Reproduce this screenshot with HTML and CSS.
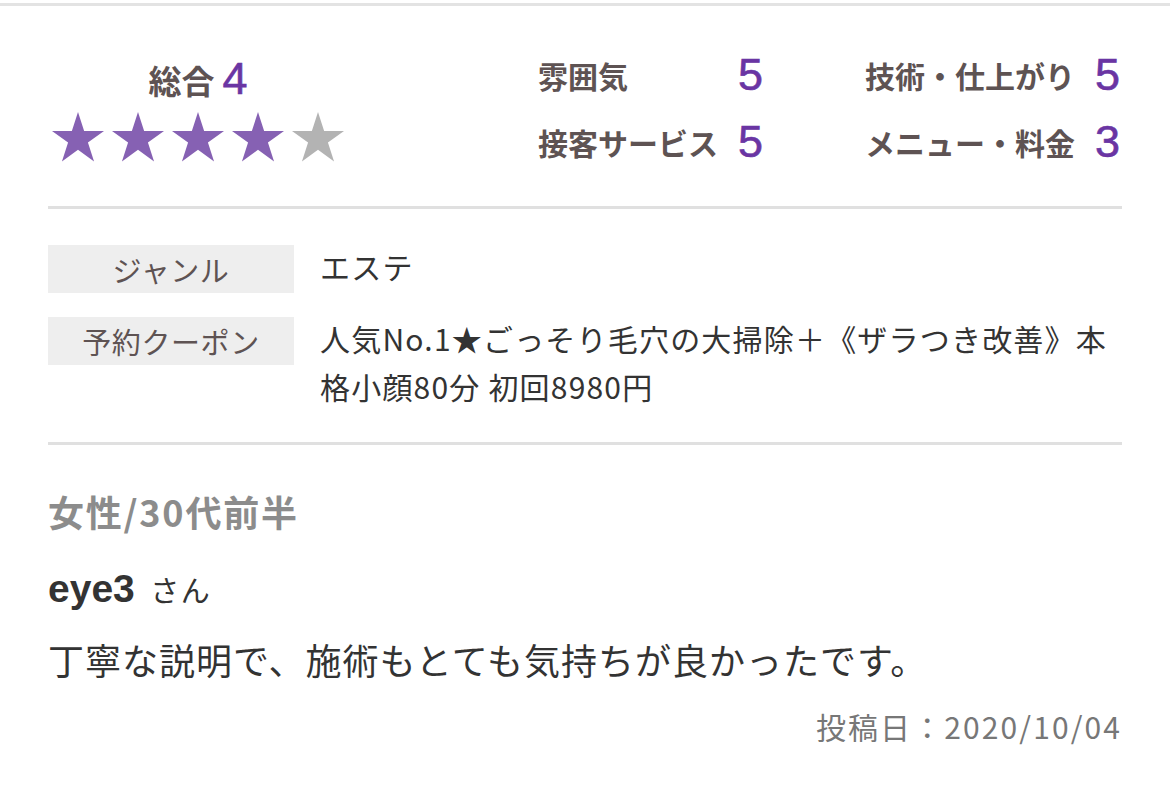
FILE: index.html
```html
<!DOCTYPE html>
<html lang="ja">
<head>
<meta charset="utf-8">
<title>口コミ</title>
<link rel="stylesheet" href="styles.css">
</head>
<body>
<div class="topline"></div>
<div class="wrap">
  <section class="summary">
    <div class="overall">
      <div class="overall-title"><span class="overall-label">総合</span><span class="overall-num">4</span></div>
      <div class="stars">
        <svg class="star on" viewBox="0 0 52 50"><polygon points="26,0 32.14,18.89 52,18.89 35.93,30.57 42.07,49.46 26,37.78 9.93,49.46 16.07,30.57 0,18.89 19.86,18.89"/></svg>
        <svg class="star on" viewBox="0 0 52 50"><polygon points="26,0 32.14,18.89 52,18.89 35.93,30.57 42.07,49.46 26,37.78 9.93,49.46 16.07,30.57 0,18.89 19.86,18.89"/></svg>
        <svg class="star on" viewBox="0 0 52 50"><polygon points="26,0 32.14,18.89 52,18.89 35.93,30.57 42.07,49.46 26,37.78 9.93,49.46 16.07,30.57 0,18.89 19.86,18.89"/></svg>
        <svg class="star on" viewBox="0 0 52 50"><polygon points="26,0 32.14,18.89 52,18.89 35.93,30.57 42.07,49.46 26,37.78 9.93,49.46 16.07,30.57 0,18.89 19.86,18.89"/></svg>
        <svg class="star off" viewBox="0 0 52 50"><polygon points="26,0 32.14,18.89 52,18.89 35.93,30.57 42.07,49.46 26,37.78 9.93,49.46 16.07,30.57 0,18.89 19.86,18.89"/></svg>
      </div>
    </div>
    <div class="scores">
      <span class="score-label">雰囲気</span><span class="score-num">5</span>
      <span class="score-label col2">技術・仕上がり</span><span class="score-num">5</span>
      <span class="score-label">接客サービス</span><span class="score-num">5</span>
      <span class="score-label col2">メニュー・料金</span><span class="score-num">3</span>
    </div>
  </section>
  <div class="divider"></div>
  <section class="info">
    <div class="info-label">ジャンル</div>
    <div class="info-value">エステ</div>
    <div class="info-label">予約クーポン</div>
    <div class="info-value">人気No.1★ごっそり毛穴の大掃除＋《ザラつき改善》本格小顔80分 初回8980円</div>
  </section>
  <div class="divider"></div>
  <section class="review">
    <div class="reviewer-attr">女性/30代前半</div>
    <div class="reviewer"><span class="reviewer-name">eye3</span> <span class="reviewer-san">さん</span></div>
    <p class="review-text">丁寧な説明で、施術もとても気持ちが良かったです。</p>
    <div class="review-date">投稿日：2020/10/04</div>
  </section>
</div>
</body>
</html>
```
FILE: styles.css
```css
html, body {
  margin: 0;
  padding: 0;
  background: #ffffff;
}
body {
  font-family: "Noto Sans CJK JP", "Noto Sans", sans-serif;
  color: #333333;
}
.topline {
  margin-top: 3px;
  height: 3px;
  background: #e3e3e3;
}
.wrap {
  padding: 0 48px;
}
.summary {
  display: flex;
  justify-content: space-between;
  align-items: flex-start;
  padding-top: 44px;
  height: 156px;
}
.overall {
  width: 300px;
  text-align: center;
  padding-top: 7px;
}
.overall-title {
  height: 44px;
  line-height: 44px;
  display: flex;
  justify-content: center;
  align-items: baseline;
}
.overall-label {
  font-size: 33px;
  font-weight: 700;
  color: #5e5353;
}
.overall-num {
  font-family: "Liberation Sans", Arial, sans-serif;
  font-size: 45px;
  color: #6a35a3;
  margin-left: 8px;
  -webkit-text-stroke: 0.6px #6a35a3;
}
.stars {
  display: flex;
  justify-content: center;
  gap: 8px;
  margin-top: 11px;
}
.star {
  width: 52px;
  height: 50px;
  display: block;
}
.star.on { fill: #8661b3; }
.star.off { fill: #b3b3b3; }
.scores {
  display: grid;
  grid-template-columns: auto auto auto auto;
  column-gap: 20px;
  row-gap: 17px;
  align-items: center;
  padding-top: 0;
}
.score-label {
  font-size: 30px;
  font-weight: 700;
  color: #5e5353;
  line-height: 50px;
}
.score-label.col2 {
  margin-left: 80px;
}
.score-num {
  font-family: "Liberation Sans", Arial, sans-serif;
  font-size: 45px;
  color: #6a35a3;
  line-height: 50px;
  width: 27px;
  -webkit-text-stroke: 0.6px #6a35a3;
}
.divider {
  height: 3px;
  background: #e0e0e0;
}
.info {
  display: grid;
  grid-template-columns: 246px 1fr;
  column-gap: 26px;
  row-gap: 24px;
  padding: 36px 0 32px;
}
.info-label {
  background: #eeeeee;
  height: 48px;
  line-height: 48px;
  text-align: center;
  font-size: 29px;
  color: #5e5353;
  letter-spacing: 0.02em;
}
.info-value {
  font-size: 30px;
  line-height: 48px;
  letter-spacing: 0.04em;
  color: #333333;
  margin-top: -3px;
}
.review {
  padding-top: 41px;
}
.reviewer-attr {
  font-size: 36px;
  font-weight: 700;
  color: #8c8c8c;
  line-height: 50px;
  letter-spacing: 0.05em;
}
.reviewer {
  margin-top: 28px;
  line-height: 50px;
  color: #333333;
}
.reviewer-name {
  font-family: "Liberation Sans", Arial, sans-serif;
  font-weight: 700;
  font-size: 39px;
}
.reviewer-san {
  font-size: 29px;
  margin-left: 12px;
  letter-spacing: 0.05em;
}
.review-text {
  margin: 14px 0 0;
  font-size: 36px;
  line-height: 50px;
  letter-spacing: 1px;
  color: #333333;
}
.review-date {
  margin-top: 22px;
  text-align: right;
  font-size: 30px;
  line-height: 40px;
  color: #777777;
  letter-spacing: 0.07em;
}
```
